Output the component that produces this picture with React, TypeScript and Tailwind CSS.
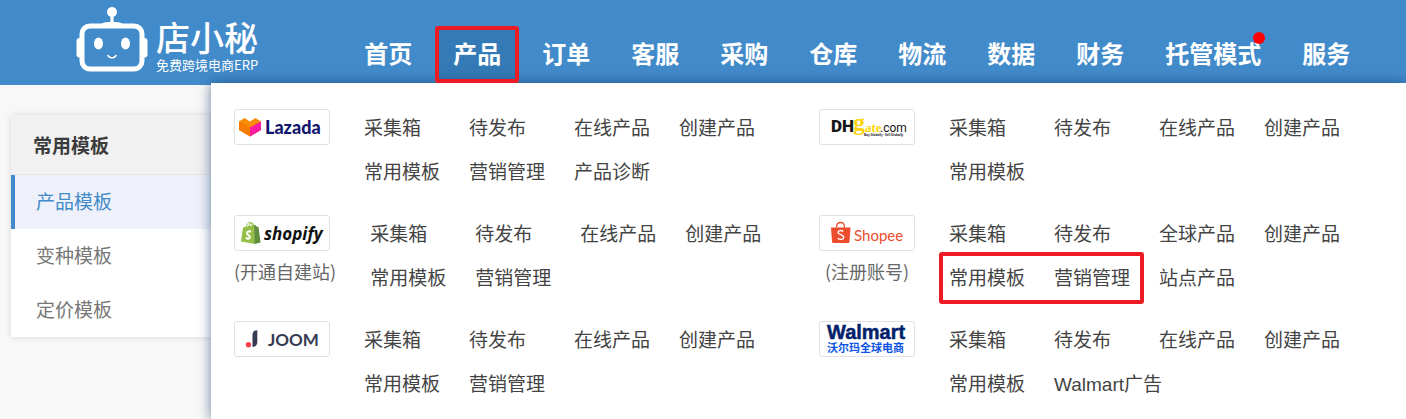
import type { ReactNode } from "react";
import clsx from "clsx";

interface Platform {
  name: string;
  logo: ReactNode;
  note?: string;
  links: string[];
  marked?: boolean;
}

const NAV = ["首页", "产品", "订单", "客服", "采购", "仓库", "物流", "数据", "财务", "托管模式", "服务"];

const SIDE_LINKS = ["产品模板", "变种模板", "定价模板"];

function LazadaLogo() {
  return (
    <>
      <path d="M5 12.500 10.500 9 16 12.500 21.500 9 27 12.500V21L16 27.500 5 21Z" fill="#f98d0b" />
      <path d="M5 12.500 16 18.500V27.500L5 21Z" fill="#f57c00" />
      <path d="M27 12.500V21L16 27.500V18.500Z" fill="#f91ba0" />
      <text x="31" y="25" fontSize="18" fontWeight="900" fill="#10156e" className="font-['Lato',sans-serif]">
        Lazada
      </text>
    </>
  );
}

function ShopifyLogo() {
  return (
    <>
      <path d="M12 13c0-3 2-5.500 4-5.500s2.500 2.500 2.500 5M14.500 12c.4-2.500 2-4.200 3.500-4 1.400.2 1.800 1.500 2 3" fill="none" stroke="#95bf47" strokeWidth="1" />
      <path d="m9 12.500 11-2.500 1 19L7 26.500Z" fill="#95bf47" />
      <path d="m20 10 1.500.2 1.500 1.500 1.500.2L26.500 27.500 20.500 29Z" fill="#5e8e3e" />
      <path d="M17 16.800c-1.800-.9-4-.3-4 1.400 0 2 3 2 2.800 4-.2 1.900-2.300 1.900-4 .7" fill="none" stroke="#fff" strokeWidth="2" />
      <text x="30" y="25" fontSize="17" fontWeight="700" fontStyle="italic" fill="#111" className="font-['Open_Sans',sans-serif]">
        shopify
      </text>
    </>
  );
}

function JoomLogo() {
  return (
    <>
      <circle cx="14.500" cy="23.700" r="2.700" fill="#f9414d" />
      <path d="M18.500 14c0-3 2-4.800 4.800-4.800V21c0 3-2 5-4.800 5Z" fill="#353a52" />
      <text x="34" y="25" fontSize="17" fontWeight="700" fill="#353a52" className="font-['Lato',sans-serif]">
        JOOM
      </text>
    </>
  );
}

function DhgateLogo() {
  return (
    <>
      <text x="12" y="23" fontSize="17" fontWeight="900" fill="#161616" className="font-['Roboto',sans-serif]">
        DH
      </text>
      <text x="34" y="21" fontSize="24" fontWeight="700" fill="#fbd405" className="font-['Liberation_Serif',serif]">
        g
      </text>
      <text x="46" y="23" fontSize="13" fontWeight="700" fill="#fbd405" className="font-['Liberation_Serif',serif]">
        ate
      </text>
      <text x="61" y="23" fontSize="12" fill="#161616" className="font-['Roboto',sans-serif]">
        .com
      </text>
      <text x="45" y="27" fontSize="3" fontWeight="700" fill="#161616" className="font-['Open_Sans',sans-serif]">
        Buy Globally · Sell Globally
      </text>
    </>
  );
}

function ShopeeLogo() {
  return (
    <>
      <path d="M17.500 12.500c0-3 1.600-5 4-5s4 2 4 5" fill="none" stroke="#ee4d2d" strokeWidth="1.300" />
      <path d="M12 12.500h19.500l-1 14c-.1 1-.7 1.500-1.600 1.500H14.600c-.9 0-1.500-.5-1.600-1.500Z" fill="#ee4d2d" />
      <path d="M24.300 16.500c-2-1.500-5.300-1.300-5.300 1 0 2.600 5.700 1.800 5.700 4.700 0 2.500-3.600 2.900-6 1" fill="none" stroke="#fff" strokeWidth="1.400" />
      <text x="35" y="26" fontSize="15" fill="#ee4d2d" className="font-['Lato',sans-serif]">
        Shopee
      </text>
    </>
  );
}

function WalmartLogo() {
  return (
    <>
      <text x="8" y="18" fontSize="20" fontWeight="700" fill="#041f6b" stroke="#041f6b" strokeWidth="0.500" className="font-['Liberation_Sans',sans-serif]">
        Walmart
      </text>
      <text x="8" y="31" fontSize="11" fontWeight="700" fill="#0a53e4" className="font-['Noto_Sans_CJK_SC',sans-serif]">
        沃尔玛全球电商
      </text>
    </>
  );
}

const PLATFORMS: Platform[] = [
  {
    name: "Lazada",
    logo: <LazadaLogo />,
    links: ["采集箱", "待发布", "在线产品", "创建产品", "常用模板", "营销管理", "产品诊断"],
  },
  {
    name: "DHgate",
    logo: <DhgateLogo />,
    links: ["采集箱", "待发布", "在线产品", "创建产品", "常用模板"],
  },
  {
    name: "Shopify",
    logo: <ShopifyLogo />,
    note: "(开通自建站)",
    links: ["采集箱", "待发布", "在线产品", "创建产品", "常用模板", "营销管理"],
  },
  {
    name: "Shopee",
    logo: <ShopeeLogo />,
    note: "(注册账号)",
    links: ["采集箱", "待发布", "全球产品", "创建产品", "常用模板", "营销管理", "站点产品"],
    marked: true,
  },
  {
    name: "Joom",
    logo: <JoomLogo />,
    links: ["采集箱", "待发布", "在线产品", "创建产品", "常用模板", "营销管理"],
  },
  {
    name: "Walmart",
    logo: <WalmartLogo />,
    links: ["采集箱", "待发布", "在线产品", "创建产品", "常用模板", "Walmart广告"],
  },
];

function Brand() {
  return (
    <a href="#" className="flex shrink-0 items-start gap-2 pt-[6px] text-white">
      <svg width="72" height="67" viewBox="0 0 72 67" aria-hidden="true">
        <circle cx="36" cy="6" r="5" fill="#fff" />
        <path d="M36 9v10" stroke="#fff" strokeWidth="3.200" />
        <path d="M24 19c2-2.500 6-3 12-3s10 .5 12 3Z" fill="#fff" />
        <rect x="6" y="20" width="60" height="43" rx="8" fill="none" stroke="#fff" strokeWidth="5" />
        <path d="M5 32.500H3a2 2 0 0 0-2 2V49a2 2 0 0 0 2 2h2ZM67 32.500h2a2 2 0 0 1 2 2V49a2 2 0 0 1-2 2h-2Z" fill="#fff" stroke="#fff" />
        <ellipse cx="22.500" cy="37.500" rx="4.500" ry="6" fill="#fff" />
        <ellipse cx="49.500" cy="37.500" rx="4.500" ry="6" fill="#fff" />
        <path d="M32 49.500c2 3.300 6 3.300 8 0" fill="none" stroke="#fff" strokeWidth="1.500" strokeLinecap="round" />
      </svg>
      <span className="flex flex-col pt-[13px]">
        <span className="text-[34px] leading-9 font-medium">店小秘</span>
        <span className="text-[13px] leading-5">免费跨境电商ERP</span>
      </span>
    </a>
  );
}

function Header() {
  return (
    <header className="flex h-[85px] items-start bg-[#428bca] pl-[76px]">
      <Brand />
      <nav className="ml-[90px] pt-[27px]">
        <ul className="flex gap-[9px]">
          {NAV.map((label) => (
            <li key={label} className="relative">
              <a
                href="#"
                className={clsx(
                  "block px-4 pb-1 text-2xl leading-[52px] font-bold whitespace-nowrap text-white",
                  label === "产品" && "bg-[#337ab7]"
                )}
              >
                {label}
              </a>
              {label === "产品" && (
                <span className="pointer-events-none absolute -inset-x-[2px] -top-px bottom-0 z-20 rounded-[3px] border-4 border-[#ed1c24]" />
              )}
              {label === "托管模式" && (
                <span className="absolute top-[5px] right-3 size-3 rounded-full bg-[#f00]" />
              )}
            </li>
          ))}
        </ul>
      </nav>
    </header>
  );
}

function Sidebar() {
  return (
    <aside className="mt-[30px] ml-[11px] w-60 bg-white shadow-[0_0_6px_rgba(0,0,0,0.14)]">
      <h2 className="border-b border-[#e4e4e4] bg-[#f1f1f1] pl-[22px] text-[19px] leading-[59px] font-bold text-[#3c3c3c]">
        常用模板
      </h2>
      <ul>
        {SIDE_LINKS.map((label, i) => (
          <li key={label}>
            <a
              href="#"
              className={clsx(
                "block border-l-4 pb-0.5 pl-[21px] text-[19px] leading-[52px]",
                i === 0 ? "border-[#428bca] bg-[#eef1fa] text-[#428bca]" : "border-transparent text-[#777]"
              )}
            >
              {label}
            </a>
          </li>
        ))}
      </ul>
    </aside>
  );
}

function PlatformGroup({ name, logo, note, links, marked }: Platform) {
  return (
    <section className="flex items-start gap-[34px]">
      <div className="flex shrink-0 flex-col items-center pt-1">
        <a href="#" aria-label={name} className="block h-9 w-24 self-start rounded-[3px] border border-[#dfe1e6] bg-white">
          <svg viewBox="1 1 94 34" className="block size-full overflow-visible">
            {logo}
          </svg>
        </a>
        {note && (
          <a href="#" className="mt-2 text-lg leading-6 whitespace-nowrap text-[#666]">
            {note}
          </a>
        )}
      </div>
      <ul className="relative grid grid-cols-[repeat(4,105px)]">
        {links.map((label) => (
          <li key={label}>
            <a
              href="#"
              className="block pt-1 font-['Liberation_Sans','Noto_Sans_CJK_SC',sans-serif] text-[19px] leading-10 whitespace-nowrap text-[#444]"
            >
              {label}
            </a>
          </li>
        ))}
        {marked && (
          <li
            aria-hidden="true"
            className="pointer-events-none absolute top-[41px] -left-[10px] h-[52px] w-[205px] rounded-[3px] border-4 border-[#ed1c24]"
          />
        )}
      </ul>
    </section>
  );
}

function ProductMenu() {
  return (
    <div className="absolute top-[83px] right-0 bottom-0 left-[211px] z-10 bg-white pt-[22px] pr-[2px] pl-[23px] shadow-[0_0_12px_rgba(10,50,100,0.6)]">
      <div className="grid grid-cols-2 gap-y-[18px]">
        {PLATFORMS.map((p) => (
          <PlatformGroup key={p.name} {...p} />
        ))}
      </div>
    </div>
  );
}

export default function App() {
  return (
    <div className="relative min-h-screen overflow-hidden bg-[#f8f8f8] font-['Noto_Sans_CJK_SC',sans-serif]">
      <Header />
      <Sidebar />
      <ProductMenu />
    </div>
  );
}
